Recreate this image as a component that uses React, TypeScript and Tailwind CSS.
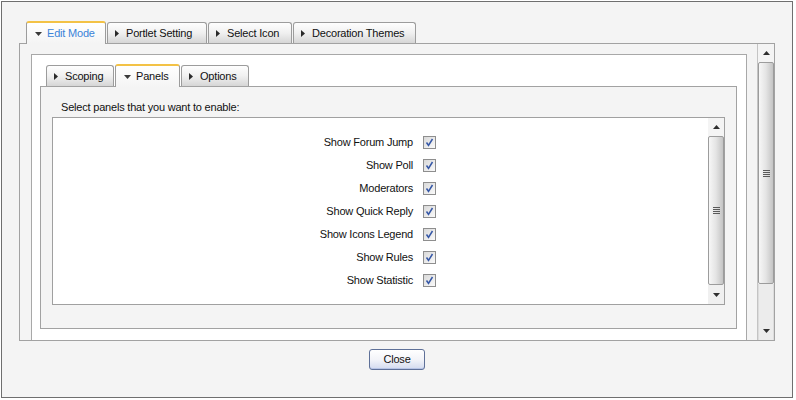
import React from "react";

function RightArrow() {
  return (
    <svg width="4" height="7" viewBox="0 0 4 7" className="shrink-0">
      <polygon points="0,0 4,3.5 0,7" fill="#2a2a2a" />
    </svg>
  );
}

function DownArrow() {
  return (
    <svg width="7" height="4" viewBox="0 0 7 4" className="shrink-0">
      <polygon points="0,0 7,0 3.5,4" fill="#3a3a3a" />
    </svg>
  );
}

function UpTri() {
  return (
    <svg width="7" height="4" viewBox="0 0 7 4">
      <polygon points="3.5,0 7,4 0,4" fill="#2f2f2f" />
    </svg>
  );
}

function DownTri() {
  return (
    <svg width="7" height="4" viewBox="0 0 7 4">
      <polygon points="0,0 7,0 3.5,4" fill="#2f2f2f" />
    </svg>
  );
}

function Grip() {
  return (
    <div className="flex flex-col gap-px">
      <div className="h-px w-[7px] bg-[#5a5a5a]" />
      <div className="h-px w-[7px] bg-[#5a5a5a]" />
      <div className="h-px w-[7px] bg-[#5a5a5a]" />
      <div className="h-px w-[7px] bg-[#5a5a5a]" />
    </div>
  );
}

function ActiveTab({ label, w, blue }: { label: string; w: string; blue?: boolean }) {
  return (
    <div
      className={`relative z-10 -mb-px h-[23px] ${w} rounded-t-[3px] border border-b-0 border-[#9c9c9c] border-t-2 border-t-[#f3c246] bg-linear-to-b from-[#ffffff] to-[#f4f4f4] flex items-center pl-[8px]`}
    >
      <DownArrow />
      <span className={`ml-[5px] whitespace-nowrap ${blue ? "text-[#3b83d8]" : "text-[#111]"}`}>{label}</span>
    </div>
  );
}

function Tab({ label, w }: { label: string; w: string }) {
  return (
    <div
      className={`h-[21px] ${w} rounded-t-[3px] border border-b-0 border-[#9c9c9c] bg-linear-to-b from-[#fefefe] via-[#f0f0f0] to-[#d6d6d6] flex items-center pl-[7px]`}
    >
      <RightArrow />
      <span className="ml-[7px] whitespace-nowrap text-[#111]">{label}</span>
    </div>
  );
}

function Check() {
  return (
    <div className="h-[13px] w-[13px] border border-[#8e8e8e] bg-linear-to-br from-[#d9d9d9] to-[#fafafa] flex items-center justify-center">
      <svg width="11" height="11" viewBox="0 0 11 11">
        <path d="M2.5 5.5 L4.5 8.3 L8.5 2" stroke="#3557a6" strokeWidth="1.5" fill="none" />
      </svg>
    </div>
  );
}

const rows = [
  "Show Forum Jump",
  "Show Poll",
  "Moderators",
  "Show Quick Reply",
  "Show Icons Legend",
  "Show Rules",
  "Show Statistic",
];

export default function App() {
  return (
    <div className="w-[796px] h-[400px] bg-white font-['Liberation_Sans',Arial,sans-serif] text-[11px] leading-[13px] tracking-[-0.2px] text-[#111]">
      <div className="ml-px mt-px w-[792px] h-[397px] border border-[#6f6f6f] bg-[#f4f4f4] flex flex-col">
        {/* Top tabs */}
        <div className="flex items-end gap-px pl-[24px] pt-[19px] h-[41px]">
          <ActiveTab label="Edit Mode" w="w-[80px]" blue />
          <Tab label="Portlet Setting" w="w-[100px]" />
          <Tab label="Select Icon" w="w-[84px]" />
          <Tab label="Decoration Themes" w="w-[123px]" />
        </div>

        {/* Outer panel */}
        <div className="ml-[17px] w-[756px] h-[298px] border border-[#a2a2a2] bg-[#f4f4f4] flex">
          <div className="w-[737px] h-full overflow-hidden pl-[11px] pt-[10px]">
            <div className="w-[716px] h-[300px] border border-[#a8a8a8] bg-white pl-[8px] pt-[8px]">
              {/* inner tabs */}
              <div className="flex items-end gap-px pl-[6px] h-[23px]">
                <Tab label="Scoping" w="w-[68px]" />
                <ActiveTab label="Panels" w="w-[65px]" />
                <Tab label="Options" w="w-[68px]" />
              </div>
              {/* inner panel */}
              <div className="w-[697px] h-[243px] border border-[#a2a2a2] bg-[#f4f4f4] pt-[14px]">
                <div className="pl-[20px] h-[13px]">Select panels that you want to enable:</div>
                <div className="mt-[3px] ml-[11px] w-[673px] h-[188px] border border-[#a0a0a0] bg-white flex">
                  <div className="flex-1 pt-[13px]">
                    {rows.map((r) => (
                      <div key={r} className="flex items-center h-[23px]">
                        <div className="w-[360px] text-right whitespace-nowrap">{r}</div>
                        <div className="ml-[10px]">
                          <Check />
                        </div>
                      </div>
                    ))}
                  </div>
                  {/* list scrollbar */}
                  <div className="w-[16px] h-full bg-[#f4f4f4] flex flex-col">
                    <div className="h-[18px] flex items-center justify-center">
                      <UpTri />
                    </div>
                    <div className="h-[149px] border border-[#9c9c9c] rounded-[2px] bg-linear-to-r from-[#f7f7f7] via-[#e4e4e4] to-[#c4c4c4] flex items-center justify-center">
                      <Grip />
                    </div>
                    <div className="flex-1 flex items-center justify-center bg-[#f0f0f0]">
                      <DownTri />
                    </div>
                  </div>
                </div>
              </div>
            </div>
          </div>
          {/* outer scrollbar */}
          <div className="w-[17px] h-full bg-[#f4f4f4] border-l border-[#c4c4c4] flex flex-col">
            <div className="h-[18px] flex items-center justify-center">
              <UpTri />
            </div>
            <div className="h-[222px] border border-[#9c9c9c] rounded-[2px] bg-linear-to-r from-[#f7f7f7] via-[#e4e4e4] to-[#c4c4c4] flex items-center justify-center">
              <Grip />
            </div>
            <div className="flex-1 bg-[#ececec] border-x border-[#dcdcdc] flex flex-col justify-end">
              <div className="h-[18px] flex items-center justify-center">
                <DownTri />
              </div>
            </div>
          </div>
        </div>

        {/* Close */}
        <div className="mt-[8px] flex justify-center">
          <button className="w-[56px] h-[21px] rounded-[3px] border border-[#5e7098] bg-linear-to-b from-white via-[#f3f4f9] to-[#d3dbef] shadow-[inset_0_-1px_0_#b7c4e6] text-[11px] text-[#111] flex items-center justify-center">
            Close
          </button>
        </div>
      </div>
    </div>
  );
}
